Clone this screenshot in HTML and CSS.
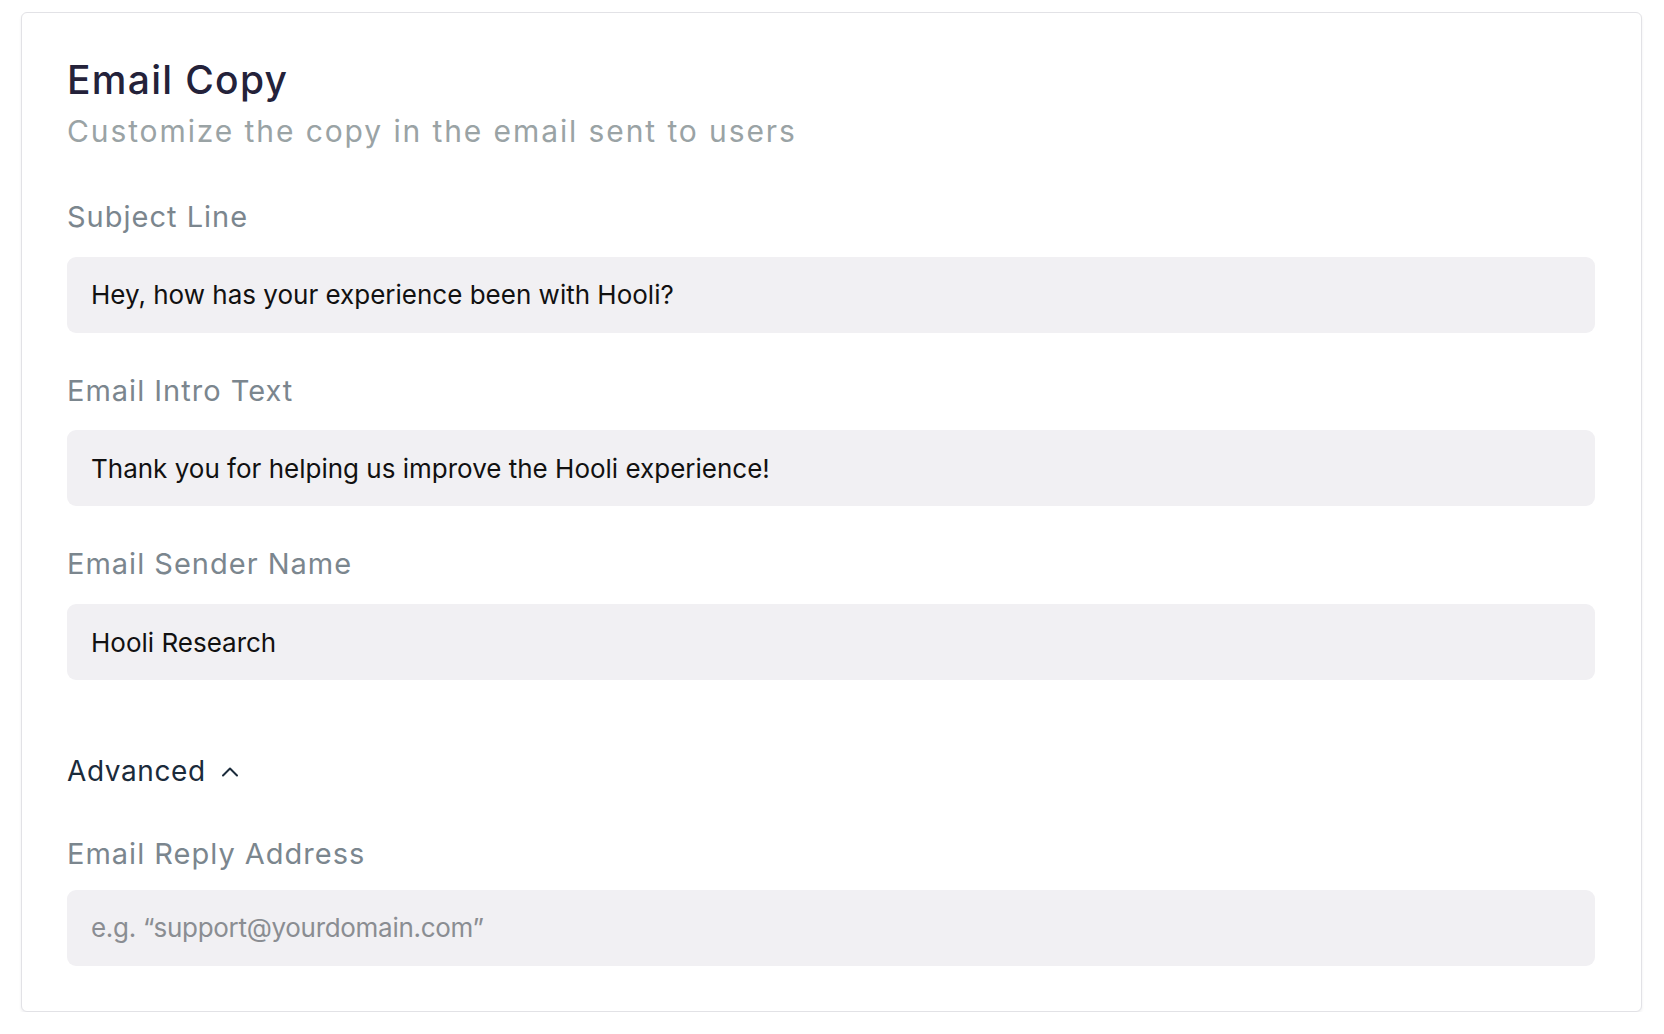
FILE: index.html
```html
<!DOCTYPE html>
<html lang="en">
<head>
<meta charset="utf-8">
<title>Email Copy</title>
<link rel="stylesheet" href="styles.css">
</head>
<body>
  <section class="card">
    <header class="card-head">
      <h2 class="card-title">Email Copy</h2>
      <p class="card-sub">Customize the copy in the email sent to users</p>
    </header>

    <div class="field">
      <label class="field-label" for="subject">Subject Line</label>
      <input class="field-input" id="subject" type="text" value="Hey, how has your experience been with Hooli?">
    </div>

    <div class="field">
      <label class="field-label" for="intro">Email Intro Text</label>
      <input class="field-input" id="intro" type="text" value="Thank you for helping us improve the Hooli experience!">
    </div>

    <div class="field">
      <label class="field-label" for="sender">Email Sender Name</label>
      <input class="field-input" id="sender" type="text" value="Hooli Research">
    </div>

    <button class="advanced-toggle" type="button">
      <span>Advanced</span>
      <svg class="chevron" width="18" height="11" viewBox="0 0 18 11" aria-hidden="true">
        <path d="M2 9.5 L9 2.5 L16 9.5" fill="none" stroke="currentColor" stroke-width="2" stroke-linecap="round" stroke-linejoin="round"/>
      </svg>
    </button>

    <div class="field field-advanced">
      <label class="field-label" for="reply">Email Reply Address</label>
      <input class="field-input" id="reply" type="text" placeholder="e.g. “support@yourdomain.com”">
    </div>
  </section>
</body>
</html>
```

FILE: styles.css
```css
html, body {
  margin: 0;
  background: #ffffff;
}

body {
  padding: 12px 22px 0 21px;
  font-family: "Inter", "Liberation Sans", sans-serif;
}

.card {
  box-sizing: border-box;
  height: 1000px;
  border: 1px solid #e2e2e6;
  border-radius: 6px;
  background: #ffffff;
  box-shadow: 0 2px 3px rgba(20, 20, 40, 0.07);
  padding: 44px 46px 46px 45px;
}

.card-head {
  margin-bottom: 51px;
}

.card-title {
  margin: 0;
  font-size: 39px;
  line-height: 1.2;
  font-weight: 500;
  letter-spacing: 1.3px;
  color: #24223a;
}

.card-sub {
  margin: 9px 0 0;
  font-size: 30px;
  line-height: 1.2;
  font-weight: 400;
  letter-spacing: 1.9px;
  color: #9aa3a5;
}

.field {
  display: flex;
  flex-direction: column;
  gap: 22px;
  margin-bottom: 41px;
}

.field-label {
  font-size: 29px;
  line-height: 1.2;
  letter-spacing: 1px;
  color: #7b868e;
}

.field-input {
  box-sizing: border-box;
  width: 100%;
  height: 76px;
  border: none;
  border-radius: 9px;
  background: #f1f0f3;
  padding: 0 24px;
  font-family: "Inter", "Liberation Sans", sans-serif;
  font-size: 26px;
  color: #111111;
  outline: none;
}

.field-input::placeholder {
  color: #8a8d92;
  letter-spacing: -0.3px;
  opacity: 1;
}

.advanced-toggle {
  display: flex;
  align-items: center;
  gap: 15px;
  margin: 75px 0 48px;
  padding: 0;
  border: none;
  background: none;
  font-family: "Inter", "Liberation Sans", sans-serif;
  font-size: 28px;
  line-height: 1.2;
  letter-spacing: 0.6px;
  color: #1b2b3b;
  cursor: pointer;
}

.chevron {
  display: block;
  color: #1b2b3b;
}

.field-advanced {
  gap: 18px;
  margin-bottom: 0;
}
```
